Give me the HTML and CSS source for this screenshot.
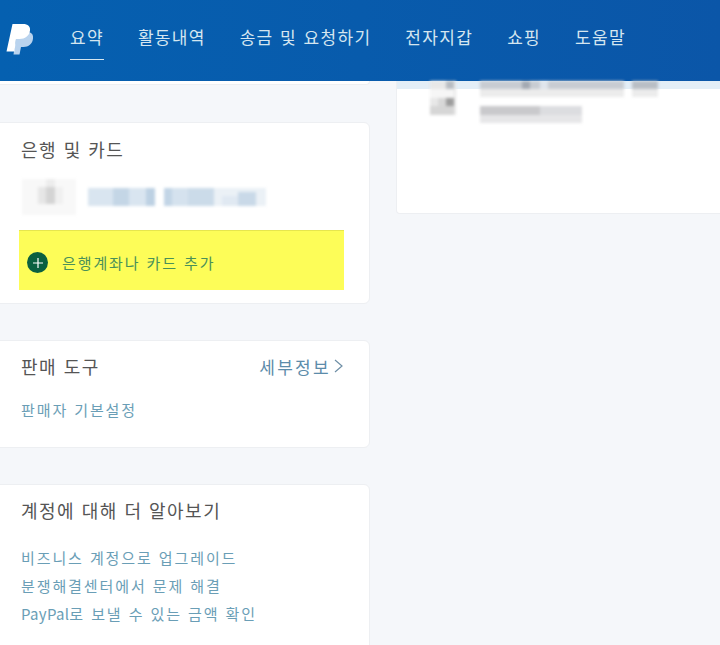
FILE: index.html
```html
<!DOCTYPE html>
<html lang="ko">
<head>
    <meta charset="UTF-8">
    <meta name="viewport" content="width=device-width, initial-scale=1.0">
    <title>PayPal 요약</title>
    <link rel="stylesheet" href="styles.css">
</head>
<body>
    <header class="top-bar">
        <svg class="logo" viewBox="0 0 28 32" width="28" height="32" aria-hidden="true">
            <path fill="#b9d3ee" d="M11 9h9c5 0 7.500 1.500 7 6.500C26.500 21 22.500 24 17.500 24H15L13.500 31.500H7.500z"/>
            <path fill="#ffffff" d="M6.500 1h10.500c5 0 7.500 2.500 7 6.500-.7 5.500-5 8.500-10.500 8.500h-3.500L8.500 28.500H0.500z"/>
        </svg>
        <nav class="nav">
            <a class="nav-item active">요약</a>
            <a class="nav-item">활동내역</a>
            <a class="nav-item">송금 및 요청하기</a>
            <a class="nav-item">전자지갑</a>
            <a class="nav-item">쇼핑</a>
            <a class="nav-item">도움말</a>
        </nav>
    </header>

    <main class="columns">
        <div class="left-col">
            <div class="card stub"></div>

            <section class="card bank-card">
                <h2>은행 및 카드</h2>
                <div class="bank-row">
                    <svg class="blur-icon" width="54" height="36" viewBox="0 0 54 36" aria-hidden="true">
                        <rect width="54" height="36" fill="#f8f8f8"/>
                        <rect x="16" y="8" width="8" height="17" fill="#e6e6e6"/>
                        <rect x="24" y="8" width="9" height="17" fill="#d4d4d4"/>
                        <rect x="24" y="0" width="9" height="8" fill="#ededed"/>
                        <rect x="33" y="8" width="8" height="17" fill="#f0f0f0"/>
                    </svg>
                    <svg class="blur-name" width="178" height="18" viewBox="0 0 178 18" aria-hidden="true">
                        <rect width="67" height="18" fill="#d9e5f0"/>
                        <rect x="25" width="16" height="18" fill="#c4d6e6"/>
                        <rect x="58" width="9" height="18" fill="#bdd1e3"/>
                        <rect x="76" width="102" height="18" fill="#ebf1f6"/>
                        <rect x="76" width="50" height="18" fill="#d5e2ee"/>
                        <rect x="76" width="8" height="18" fill="#c2d5e6"/>
                        <rect x="100" width="26" height="18" fill="#cbdbe9"/>
                        <rect x="134" y="8" width="16" height="10" fill="#e0e9f2"/>
                        <rect x="150" y="4" width="18" height="14" fill="#c9d9e8"/>
                    </svg>
                </div>
                <a class="add-bank">
                    <span class="plus-icon">
                        <svg width="12" height="12" viewBox="0 0 12 12" aria-hidden="true">
                            <path d="M6 1v10M1 6h10" stroke="#ffffff" stroke-width="1.200" fill="none"/>
                        </svg>
                    </span>
                    <span>은행계좌나 카드 추가</span>
                </a>
            </section>

            <section class="card tools-card">
                <div class="card-head">
                    <h2>판매 도구</h2>
                    <a class="more">세부정보
                        <svg width="9" height="14" viewBox="0 0 9 14" aria-hidden="true">
                            <path d="M1 1l7 6-7 6" stroke="#6f8fa6" stroke-width="1.200" fill="none"/>
                        </svg>
                    </a>
                </div>
                <a class="link">판매자 기본설정</a>
            </section>

            <section class="card learn-card">
                <h2>계정에 대해 더 알아보기</h2>
                <ul class="link-list">
                    <li><a class="link">비즈니스 계정으로 업그레이드</a></li>
                    <li><a class="link">분쟁해결센터에서 문제 해결</a></li>
                    <li><a class="link"><span class="brand">PayPal</span>로 보낼 수 있는 금액 확인</a></li>
                </ul>
            </section>
        </div>

        <div class="right-col">
            <section class="card activity-card">
                <svg class="blur-icon" width="26" height="36" viewBox="0 0 26 36" aria-hidden="true">
                    <rect width="26" height="34" fill="#e8e8e8"/>
                    <rect x="16" width="8" height="8" fill="#b8bcc2"/>
                    <rect x="0" y="8" width="24" height="9" fill="#f6f6f6"/>
                    <rect x="8" y="17" width="8" height="8" fill="#d8d8d8"/>
                    <rect x="16" y="17" width="8" height="8" fill="#9d9d9d"/>
                    <rect x="0" y="25" width="24" height="9" fill="#d6d6d6"/>
                </svg>
                <svg class="blur-lines" width="178" height="42" viewBox="0 0 178 42" aria-hidden="true">
                    <rect width="144" height="8" fill="#c8ccd2"/>
                    <rect x="42" width="8" height="8" fill="#a3a9b2"/>
                    <rect x="60" width="8" height="8" fill="#e0e5ec"/>
                    <rect x="152" width="26" height="8" fill="#b9bec5"/>
                    <rect y="8" width="144" height="8" fill="#ececec"/>
                    <rect x="152" y="8" width="26" height="8" fill="#ececec"/>
                    <rect y="25" width="60" height="9" fill="#c9c9cc"/>
                    <rect x="60" y="25" width="42" height="9" fill="#dcdde0"/>
                    <rect y="34" width="102" height="8" fill="#e6e6e8"/>
                </svg>
            </section>
        </div>
    </main>
</body>
</html>
```

FILE: styles.css
```css
html, body {
    height: 100%;
}
body {
    margin: 0;
    font-family: 'Noto Sans CJK KR', 'Noto Sans', sans-serif;
    background: #f5f7fa;
    color: #444;
    overflow: hidden;
}
a {
    text-decoration: none;
}
h2 {
    margin: 0;
    font-size: 18px;
    font-weight: 400;
    line-height: 26px;
    color: #555;
    letter-spacing: 1.5px;
}
.top-bar {
    height: 81px;
    display: flex;
    background: linear-gradient(to right, #0560b0, #0b56a8);
}
.logo {
    margin: 23px 0 0 6px;
}
.nav {
    display: flex;
    gap: 34px;
    margin-left: 36px;
}
.nav-item {
    height: 60px;
    padding-top: 24px;
    box-sizing: border-box;
    font-size: 17px;
    line-height: 26px;
    letter-spacing: 1.3px;
    word-spacing: 0.5px;
    color: #d5e6f0;
    border-bottom: 1px solid transparent;
}
.nav-item.active {
    border-bottom-color: #d5e6f0;
}
.columns {
    display: flex;
    gap: 26px;
    align-items: flex-start;
}
.left-col {
    width: 380px;
    margin-left: -10px;
    display: flex;
    flex-direction: column;
    gap: 36px;
    flex-shrink: 0;
}
.right-col {
    flex: 1;
    margin-right: -10px;
}
.card {
    background: #fff;
    border: 1px solid #edeff2;
    border-radius: 6px;
    box-sizing: border-box;
}
.stub {
    height: 4px;
    border-top: 0;
    border-radius: 0 0 6px 6px;
    margin-bottom: 1px;
}
.bank-card {
    height: 182px;
    padding: 13px 25px 0 30px;
}
.bank-row {
    display: flex;
    align-items: center;
    gap: 12px;
    margin: 17px 0 0 1px;
}
.blur-icon, .blur-name, .blur-lines {
    display: block;
    flex-shrink: 0;
    filter: blur(1.500px);
}
.add-bank {
    display: flex;
    align-items: center;
    gap: 14px;
    width: 325px;
    height: 60px;
    margin: 15px 0 0 -2px;
    padding: 4px 0 0 8px;
    box-sizing: border-box;
    background: #fdfd58;
    border-top: 1px solid #e6e64e;
    font-size: 15px;
    letter-spacing: 1.9px;
    color: #4a9058;
}
.plus-icon {
    width: 21px;
    height: 21px;
    border-radius: 50%;
    background: #0b6040;
    display: flex;
    align-items: center;
    justify-content: center;
}
.tools-card {
    height: 108px;
    padding: 12px 26px 0 30px;
}
.card-head {
    display: flex;
    justify-content: space-between;
    align-items: center;
}
.more {
    display: flex;
    align-items: center;
    gap: 3px;
    font-size: 17px;
    letter-spacing: 2.300px;
    color: #5c8caa;
}
.link {
    font-size: 15px;
    line-height: 28px;
    letter-spacing: 1.9px;
    color: #6a9eb6;
}
.brand {
    letter-spacing: 0.3px;
}
.tools-card .link {
    display: block;
    margin-top: 17px;
}
.learn-card {
    height: 200px;
    padding: 12px 25px 0 30px;
}
.link-list {
    list-style: none;
    margin: 21px 0 0;
    padding: 0;
}
.activity-card {
    height: 133px;
    display: flex;
    gap: 24px;
    padding: 0 0 0 33px;
    border-top: 0;
    border-radius: 0 0 4px 4px;
    background: linear-gradient(to bottom, #e3eef7 0, #e3eef7 8px, #fff 8px);
}
```
